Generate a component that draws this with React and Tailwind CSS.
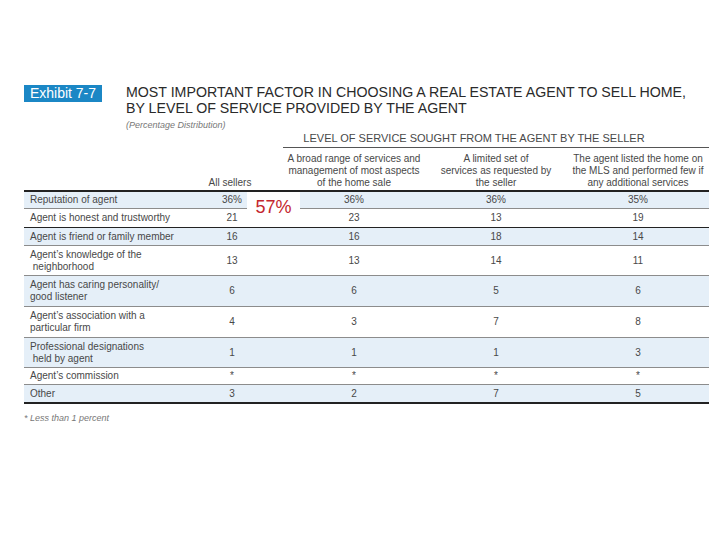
import React from "react";

// Survey data: most important factor in choosing an agent
const columns = [
  "A broad range of services and management of most aspects of the home sale",
  "A limited set of services as requested by the seller",
  "The agent listed the home on the MLS and performed few if any additional services",
];

const headerLines = [
  ["A broad range of services and", "management of most aspects", "of the home sale"],
  ["A limited set of", "services as requested by", "the seller"],
  ["The agent listed the home on", "the MLS and performed few if", "any additional services"],
];

const rows = [
  { label: ["Reputation of agent"], values: ["36%", "36%", "36%", "35%"], h: "h-[17px]", blue: true },
  { label: ["Agent is honest and trustworthy"], values: ["21", "23", "13", "19"], h: "h-[19px]", dark: true },
  { label: ["Agent is friend or family member"], values: ["16", "16", "18", "14"], h: "h-[18px]", blue: true },
  { label: ["Agent’s knowledge of the", "\u00a0neighborhood"], values: ["13", "13", "14", "11"], h: "h-[30px]" },
  { label: ["Agent has caring personality/", "good listener"], values: ["6", "6", "5", "6"], h: "h-[31px]", blue: true },
  { label: ["Agent’s association with a", "particular firm"], values: ["4", "3", "7", "8"], h: "h-[31px]" },
  { label: ["Professional designations", "\u00a0held by agent"], values: ["1", "1", "1", "3"], h: "h-[30px]", blue: true },
  { label: ["Agent’s commission"], values: ["*", "*", "*", "*"], h: "h-[17px]" },
  { label: ["Other"], values: ["3", "2", "7", "5"], h: "h-[19px]", blue: true, last: true },
];

export default function App() {
  return (
    <div className="w-[728px] h-[546px] bg-white font-['Liberation_Sans',Arial,sans-serif] text-[#3a3a3a] overflow-hidden">
      <div className="pt-[84px] pl-[24px] w-[709px]">
        {/* title */}
        <div className="flex items-start gap-[24px]">
          <div className="mt-[1px] h-[17px] w-[78px] bg-[#1b87c5] text-white text-[14px] leading-[17px] text-center">
            Exhibit 7-7
          </div>
          <div>
            <h1 className="text-[14.2px] leading-[16px] text-[#2a2a2a]">
              MOST IMPORTANT FACTOR IN CHOOSING A REAL ESTATE AGENT TO SELL HOME,
              <br />
              BY LEVEL OF SERVICE PROVIDED BY THE AGENT
            </h1>
            <p className="mt-[3px] text-[9px] leading-[12px] italic text-[#777]">
              (Percentage Distribution)
            </p>
          </div>
        </div>

        {/* table */}
        <div className="relative mt-[1px] text-[10px] leading-[12px] text-[#484848]">
          <div className="grid grid-cols-[159px_100px_426px]">
            <div className="col-start-3 border-b border-[#555] h-[16px] text-center text-[11px] pr-[44px]">
              LEVEL OF SERVICE SOUGHT FROM THE AGENT BY THE SELLER
            </div>
          </div>
          <div className="grid grid-cols-[159px_100px_142px_142px_142px] h-[44px] items-end pb-[1px] border-b-2 border-[#222]">
            <div />
            <div className="text-center pr-[6px]">All sellers</div>
            {headerLines.map((lines, i) => (
              <div key={i} className="text-center" title={columns[i]}>
                {lines.map((l, j) => (
                  <div key={j}>{l}</div>
                ))}
              </div>
            ))}
          </div>

          {rows.map((row, i) => (
            <div
              key={i}
              className={
                "grid grid-cols-[159px_100px_142px_142px_142px] items-center " +
                row.h +
                (row.blue ? " bg-[#e5eff8]" : " bg-white") +
                (row.last
                  ? " border-b-2 border-[#222]"
                  : row.dark
                  ? " border-b border-[#222]"
                  : " border-b border-[#8c8c8c]")
              }
            >
              <div className="pl-[6px]">
                {row.label.map((l, j) => (
                  <div key={j}>{l}</div>
                ))}
              </div>
              {row.values.map((v, j) => (
                <div key={j} className={"text-center " + (j === 0 ? "pr-[2px]" : "")}>
                  {v}
                </div>
              ))}
            </div>
          ))}

          <div className="absolute left-[223px] top-[60px] w-[53px] h-[26px] bg-white text-[#c4262e] text-[18px] leading-[22px] pt-[4px] text-center">
            57%
          </div>
        </div>

        <p className="mt-[8px] text-[9px] leading-[12px] italic text-[#777]">* Less than 1 percent</p>
      </div>
    </div>
  );
}
